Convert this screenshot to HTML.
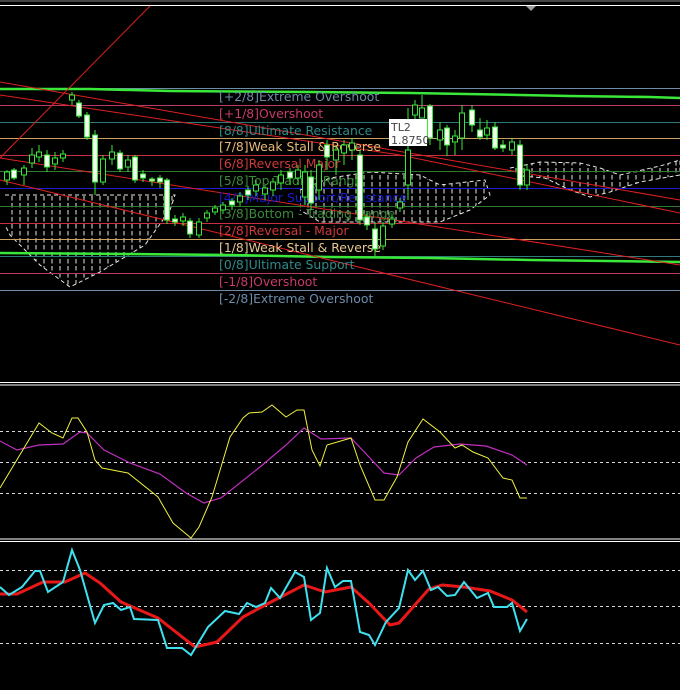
<!DOCTYPE html>
<html><head><meta charset="utf-8"><style>
html,body{margin:0;padding:0;background:#000;width:680px;height:690px;overflow:hidden}
svg{display:block}
text{font-family:"DejaVu Sans","Liberation Sans",sans-serif;font-size:12.4px}
</style></head><body>
<svg width="680" height="690" viewBox="0 0 680 690" xmlns="http://www.w3.org/2000/svg">
<defs>
<pattern id="vd" width="8" height="7" patternUnits="userSpaceOnUse">
<line x1="4" y1="0" x2="4" y2="4.5" stroke="#e8e8e0" stroke-width="1"/>
</pattern>
</defs>
<rect width="680" height="690" fill="#000"/>
<line x1="0" y1="1" x2="680" y2="1" stroke="#8a8a8a"/>
<line x1="0" y1="5.5" x2="680" y2="5.5" stroke="#fff"/>
<polygon points="526,6 536,6 531,11" fill="#9a9aa0"/>

<g>
<polygon points="5,195 175,195 170,210 145,245 100,272 70,287 40,265 10,235 5,225" fill="url(#vd)"/>
<polyline points="5,195 175,195 170,210 145,245 100,272 70,287 40,265 10,235 5,225" fill="none" stroke="#e8e8e0" stroke-dasharray="4,3"/>
<polygon points="300,190 330,178 370,172 420,175 440,185 485,180 490,195 470,210 440,222 400,222 360,222 320,222 300,210" fill="url(#vd)"/>
<polyline points="300,190 330,178 370,172 420,175 440,185 485,180 490,195 470,210 440,222 400,222 360,222 320,222 300,210" fill="none" stroke="#e8e8e0" stroke-dasharray="4,3"/>
<polygon points="510,168 540,162 580,163 600,168 620,175 660,166 680,160 680,175 640,182 610,192 590,197 570,190 545,178 520,176" fill="url(#vd)"/>
<polyline points="510,168 540,162 580,163 600,168 620,175 660,166 680,160 680,175 640,182 610,192 590,197 570,190 545,178 520,176" fill="none" stroke="#e8e8e0" stroke-dasharray="4,3"/>
</g>

<g stroke-width="1">
<line x1="0" y1="88.5" x2="680" y2="88.5" stroke="#6c8caa"/>
<line x1="0" y1="105.5" x2="680" y2="105.5" stroke="#b83a6a"/>
<line x1="0" y1="122.5" x2="680" y2="122.5" stroke="#2f7a7a"/>
<line x1="0" y1="138.5" x2="680" y2="138.5" stroke="#c8a060"/>
<line x1="0" y1="155.5" x2="680" y2="155.5" stroke="#c83040"/>
<line x1="0" y1="171.5" x2="680" y2="171.5" stroke="#2e7a2e"/>
<line x1="0" y1="188.5" x2="680" y2="188.5" stroke="#1a1ad0"/>
<line x1="0" y1="206.5" x2="680" y2="206.5" stroke="#2e7a2e"/>
<line x1="0" y1="223.5" x2="680" y2="223.5" stroke="#c83040"/>
<line x1="0" y1="239.5" x2="680" y2="239.5" stroke="#c8a060"/>
<line x1="0" y1="256.5" x2="680" y2="256.5" stroke="#2f7a7a"/>
<line x1="0" y1="273.5" x2="680" y2="273.5" stroke="#b83a6a"/>
<line x1="0" y1="290.5" x2="680" y2="290.5" stroke="#6c8caa"/>
</g>
<polyline points="0,89 90,89 170,91 310,92 410,93 520,95 570,96 650,97 680,98" fill="none" stroke="#3ae83a" stroke-width="2.5"/>
<polyline points="0,253 130,254 230,255 330,257 430,258 530,260 680,262" fill="none" stroke="#3ae83a" stroke-width="2.5"/>

<g stroke="#e02020" stroke-width="1" fill="none">
<line x1="0" y1="82" x2="680" y2="200"/>
<line x1="0" y1="95" x2="400" y2="155"/>
<line x1="400" y1="155" x2="680" y2="213"/>
<line x1="0" y1="158" x2="680" y2="265"/>
<line x1="0" y1="180" x2="680" y2="345"/>
<line x1="0" y1="158" x2="150" y2="6"/>
</g>

<g>
<text x="219" y="101" fill="#6c8caa">[+2/8]Extreme Overshoot</text>
<text x="219" y="118" fill="#c83a6a">[+1/8]Overshoot</text>
<text x="219" y="135" fill="#2f8a8a">[8/8]Ultimate Resistance</text>
<text x="219" y="151" fill="#e8b878">[7/8]Weak Stall &amp; Reverse</text>
<text x="219" y="168" fill="#d03a3a">[6/8]Reversal Major</text>
<text x="219" y="185" fill="#3a8a3a">[5/8]Top Trading Range</text>
<text x="219" y="202" fill="#1a1ad0">[4/8]Major Support/Resistance</text>
<text x="219" y="218" fill="#3a8a3a">[3/8]Bottom - Trading Range</text>
<text x="219" y="235" fill="#d03a3a">[2/8]Reversal - Major</text>
<text x="219" y="252" fill="#e8c890">[1/8]Weak Stall &amp; Reverse</text>
<text x="219" y="269" fill="#2f8a8a">[0/8]Ultimate Support</text>
<text x="219" y="286" fill="#c83a6a">[-1/8]Overshoot</text>
<text x="219" y="303" fill="#6c8caa">[-2/8]Extreme Overshoot</text>
</g>

<g stroke="#3ae83a" stroke-width="1">
<line x1="7" y1="170" x2="7" y2="185"/><rect x="4.5" y="172" width="5" height="8" fill="#000"/>
<line x1="14" y1="168" x2="14" y2="180"/><rect x="11.5" y="170" width="5" height="8" fill="#f4fff0"/>
<line x1="24" y1="165" x2="24" y2="185"/><rect x="21.5" y="168" width="5" height="7" fill="#000"/>
<line x1="32" y1="148" x2="32" y2="168"/><rect x="29.5" y="155" width="5" height="8" fill="#000"/>
<line x1="39" y1="145" x2="39" y2="162"/><rect x="36.5" y="152" width="5" height="5" fill="#000"/>
<line x1="47" y1="150" x2="47" y2="172"/><rect x="44.5" y="155" width="5" height="12" fill="#f4fff0"/>
<line x1="55" y1="152" x2="55" y2="170"/><rect x="52.5" y="158" width="5" height="6" fill="#000"/>
<line x1="63" y1="150" x2="63" y2="162"/><rect x="60.5" y="154" width="5" height="4" fill="#000"/>
<line x1="72" y1="92" x2="72" y2="105"/><rect x="69.5" y="95" width="5" height="5" fill="#000"/>
<line x1="79" y1="100" x2="79" y2="118"/><rect x="76.5" y="103" width="5" height="13" fill="#f4fff0"/>
<line x1="87" y1="112" x2="87" y2="140"/><rect x="84.5" y="115" width="5" height="22" fill="#f4fff0"/>
<line x1="95" y1="130" x2="95" y2="195"/><rect x="92.5" y="135" width="5" height="47" fill="#f4fff0"/>
<line x1="103" y1="155" x2="103" y2="185"/><rect x="100.5" y="159" width="5" height="23" fill="#000"/>
<line x1="112" y1="145" x2="112" y2="165"/><rect x="109.5" y="152" width="5" height="7" fill="#000"/>
<line x1="120" y1="150" x2="120" y2="172"/><rect x="117.5" y="153" width="5" height="16" fill="#f4fff0"/>
<line x1="128" y1="155" x2="128" y2="172"/><rect x="125.5" y="160" width="5" height="7" fill="#000"/>
<line x1="135" y1="155" x2="135" y2="183"/><rect x="132.5" y="157" width="5" height="23" fill="#f4fff0"/>
<line x1="143" y1="170" x2="143" y2="182"/><rect x="140.5" y="174" width="5" height="4" fill="#f4fff0"/>
<line x1="152" y1="177" x2="152" y2="186"/><rect x="149.5" y="179" width="5" height="2" fill="#f4fff0"/>
<line x1="160" y1="175" x2="160" y2="188"/><rect x="157.5" y="178" width="5" height="4" fill="#f4fff0"/>
<line x1="167" y1="178" x2="167" y2="224"/><rect x="164.5" y="180" width="5" height="40" fill="#f4fff0"/>
<line x1="175" y1="215" x2="175" y2="226"/><rect x="172.5" y="219" width="5" height="3" fill="#f4fff0"/>
<line x1="183" y1="213" x2="183" y2="226"/><rect x="180.5" y="217" width="5" height="4" fill="#000"/>
<line x1="190" y1="218" x2="190" y2="238"/><rect x="187.5" y="221" width="5" height="13" fill="#f4fff0"/>
<line x1="199" y1="218" x2="199" y2="238"/><rect x="196.5" y="222" width="5" height="13" fill="#000"/>
<line x1="207" y1="210" x2="207" y2="222"/><rect x="204.5" y="213" width="5" height="5" fill="#000"/>
<line x1="215" y1="205" x2="215" y2="215"/><rect x="212.5" y="208" width="5" height="4" fill="#000"/>
<line x1="223" y1="202" x2="223" y2="214"/><rect x="220.5" y="205" width="5" height="5" fill="#000"/>
<line x1="232" y1="198" x2="232" y2="210"/><rect x="229.5" y="201" width="5" height="4" fill="#f4fff0"/>
<line x1="240" y1="192" x2="240" y2="206"/><rect x="237.5" y="196" width="5" height="6" fill="#000"/>
<line x1="248" y1="186" x2="248" y2="200"/><rect x="245.5" y="190" width="5" height="5" fill="#f4fff0"/>
<line x1="256" y1="180" x2="256" y2="196"/><rect x="253.5" y="185" width="5" height="6" fill="#000"/>
<line x1="265" y1="185" x2="265" y2="200"/><rect x="262.5" y="188" width="5" height="6" fill="#000"/>
<line x1="273" y1="178" x2="273" y2="196"/><rect x="270.5" y="182" width="5" height="8" fill="#000"/>
<line x1="281" y1="170" x2="281" y2="190"/><rect x="278.5" y="175" width="5" height="8" fill="#000"/>
<line x1="290" y1="168" x2="290" y2="185"/><rect x="287.5" y="172" width="5" height="6" fill="#f4fff0"/>
<line x1="298" y1="165" x2="298" y2="185"/><rect x="295.5" y="170" width="5" height="8" fill="#000"/>
<line x1="305" y1="165" x2="305" y2="205"/><rect x="302.5" y="172" width="5" height="25" fill="#000"/>
<line x1="311" y1="170" x2="311" y2="210"/><rect x="308.5" y="177" width="5" height="26" fill="#f4fff0"/>
<line x1="319" y1="160" x2="319" y2="200"/><rect x="316.5" y="165" width="5" height="25" fill="#000"/>
<line x1="327" y1="140" x2="327" y2="170"/><rect x="324.5" y="145" width="5" height="12" fill="#f4fff0"/>
<line x1="336" y1="145" x2="336" y2="175"/><rect x="333.5" y="150" width="5" height="10" fill="#000"/>
<line x1="344" y1="140" x2="344" y2="165"/><rect x="341.5" y="145" width="5" height="8" fill="#000"/>
<line x1="352" y1="138" x2="352" y2="160"/><rect x="349.5" y="143" width="5" height="7" fill="#000"/>
<line x1="360" y1="150" x2="360" y2="225"/><rect x="357.5" y="155" width="5" height="65" fill="#f4fff0"/>
<line x1="367" y1="212" x2="367" y2="230"/><rect x="364.5" y="217" width="5" height="8" fill="#f4fff0"/>
<line x1="375" y1="222" x2="375" y2="256"/><rect x="372.5" y="229" width="5" height="20" fill="#f4fff0"/>
<line x1="383" y1="222" x2="383" y2="250"/><rect x="380.5" y="226" width="5" height="20" fill="#000"/>
<line x1="392" y1="215" x2="392" y2="228"/><rect x="389.5" y="219" width="5" height="5" fill="#000"/>
<line x1="400" y1="198" x2="400" y2="212"/><rect x="397.5" y="202" width="5" height="6" fill="#000"/>
<line x1="408" y1="108" x2="408" y2="200"/><rect x="405.5" y="150" width="5" height="35" fill="#000"/>
<line x1="415" y1="100" x2="415" y2="125"/><rect x="412.5" y="105" width="5" height="10" fill="#000"/>
<line x1="422" y1="95" x2="422" y2="118"/><rect x="419.5" y="108" width="5" height="10" fill="#000"/>
<line x1="430" y1="104" x2="430" y2="145"/><rect x="427.5" y="106" width="5" height="32" fill="#f4fff0"/>
<line x1="440" y1="122" x2="440" y2="150"/><rect x="437.5" y="130" width="5" height="10" fill="#000"/>
<line x1="447" y1="125" x2="447" y2="156"/><rect x="444.5" y="128" width="5" height="17" fill="#f4fff0"/>
<line x1="455" y1="130" x2="455" y2="155"/><rect x="452.5" y="136" width="5" height="6" fill="#000"/>
<line x1="462" y1="105" x2="462" y2="150"/><rect x="459.5" y="113" width="5" height="25" fill="#000"/>
<line x1="472" y1="105" x2="472" y2="132"/><rect x="469.5" y="110" width="5" height="15" fill="#f4fff0"/>
<line x1="480" y1="118" x2="480" y2="140"/><rect x="477.5" y="130" width="5" height="7" fill="#f4fff0"/>
<line x1="487" y1="120" x2="487" y2="140"/><rect x="484.5" y="128" width="5" height="7" fill="#000"/>
<line x1="495" y1="122" x2="495" y2="150"/><rect x="492.5" y="127" width="5" height="21" fill="#f4fff0"/>
<line x1="503" y1="140" x2="503" y2="152"/><rect x="500.5" y="145" width="5" height="3" fill="#f4fff0"/>
<line x1="512" y1="138" x2="512" y2="155"/><rect x="509.5" y="142" width="5" height="8" fill="#000"/>
<line x1="520" y1="140" x2="520" y2="190"/><rect x="517.5" y="145" width="5" height="40" fill="#f4fff0"/>
<line x1="527" y1="165" x2="527" y2="190"/><rect x="524.5" y="170" width="5" height="15" fill="#000"/>
</g>

<rect x="389" y="119" width="38" height="27" fill="#fff"/>
<text x="391" y="131" fill="#444" style="font-size:11px">TL2</text>
<text x="391" y="144" fill="#444" style="font-size:11px">1.8750</text>

<line x1="0" y1="382.5" x2="680" y2="382.5" stroke="#fff"/>
<line x1="0" y1="385" x2="680" y2="385" stroke="#fff"/>
<line x1="0" y1="539" x2="680" y2="539" stroke="#fff"/>
<line x1="0" y1="541.5" x2="680" y2="541.5" stroke="#fff"/>

<g stroke="#d8d8d8" stroke-dasharray="3,3">
<line x1="0" y1="431.5" x2="680" y2="431.5"/>
<line x1="0" y1="462.5" x2="680" y2="462.5"/>
<line x1="0" y1="493.5" x2="680" y2="493.5"/>
<line x1="0" y1="570.5" x2="680" y2="570.5"/>
<line x1="0" y1="606.5" x2="680" y2="606.5"/>
<line x1="0" y1="643.5" x2="680" y2="643.5"/>
</g>
<polyline fill="none" stroke="#c030c0" stroke-width="1.2" points="0,441 17,450 39,445 63,444 80,432 87,433 104,450 130,463 160,474 186,493 204,503 221,498 260,467 286,445 304,428 321,439 351,438 369,457 384,473 399,475 416,458 434,447 460,444 486,446 512,455 527,465"/>
<polyline fill="none" stroke="#f0f040" stroke-width="1" points="0,488 39,423 52,433 63,438 72,418 78,418 87,432 95,460 102,468 128,473 158,497 173,523 191,538 199,527 212,497 230,437 243,418 249,413 262,412 272,405 286,417 297,410 304,410 312,450 320,466 327,445 351,438 360,465 375,500 384,500 397,477 408,442 423,419 440,432 455,448 462,445 473,452 488,458 503,478 512,480 520,498 527,498"/>

<polyline fill="none" stroke="#e81818" stroke-width="3" stroke-linejoin="round" points="0,594 17,594 43,582 65,582 85,573 100,583 121,602 158,618 195,647 217,642 243,617 269,603 304,585 325,592 351,587 369,603 390,625 399,623 429,589 442,585 464,587 490,591 512,600 527,612"/>
<polyline fill="none" stroke="#40e0f0" stroke-width="2" points="0,587 9,595 22,587 35,571 40,571 48,592 63,582 72,550 80,570 95,623 104,605 113,603 121,610 130,607 134,619 158,620 167,648 182,648 191,655 208,627 225,611 239,614 247,603 256,607 265,603 271,588 280,598 295,572 304,577 311,620 320,613 327,568 335,587 343,581 351,581 360,632 369,635 375,645 386,622 399,608 408,570 415,580 423,571 431,590 438,587 447,596 455,595 464,582 477,598 488,593 494,607 507,607 512,603 520,631 527,619"/>
</svg>
</body></html>
